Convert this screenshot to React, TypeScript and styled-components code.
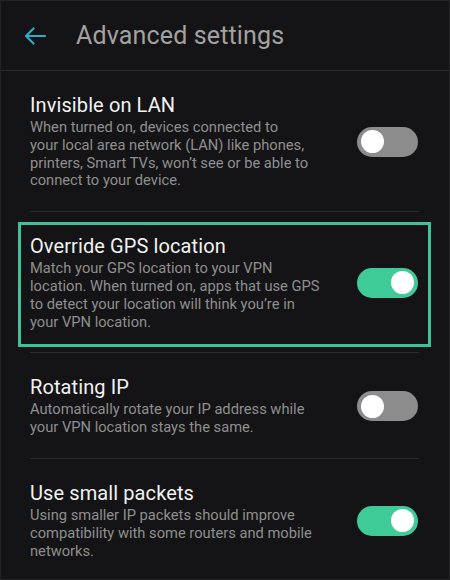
import styled, { createGlobalStyle } from "styled-components";

const GlobalStyle = createGlobalStyle`
  html, body {
    margin: 0;
    padding: 0;
    background: #141416;
  }
  body {
    font-family: Roboto, "Noto Sans", Arial, sans-serif;
    -webkit-font-smoothing: antialiased;
  }
`;

type Setting = {
  title: string;
  lines: string[];
  enabled: boolean;
  highlighted?: boolean;
};

const settings: Setting[] = [
  {
    title: "Invisible on LAN",
    lines: [
      "When turned on, devices connected to",
      "your local area network (LAN) like phones,",
      "printers, Smart TVs, won\u2019t see or be able to",
      "connect to your device.",
    ],
    enabled: false,
  },
  {
    title: "Override GPS location",
    lines: [
      "Match your GPS location to your VPN",
      "location. When turned on, apps that use GPS",
      "to detect your location will think you\u2019re in",
      "your VPN location.",
    ],
    enabled: true,
    highlighted: true,
  },
  {
    title: "Rotating IP",
    lines: [
      "Automatically rotate your IP address while",
      "your VPN location stays the same.",
    ],
    enabled: false,
  },
  {
    title: "Use small packets",
    lines: [
      "Using smaller IP packets should improve",
      "compatibility with some routers and mobile",
      "networks.",
    ],
    enabled: true,
  },
];

const BackArrow = () => (
  <svg width='22' height='18' viewBox='0 0 22 18' fill='none'>
    <path
      d='M21 9H2.5M9.5 1.5L2 9l7.5 7.5'
      stroke='#2eaacb'
      strokeWidth='2.2'
      strokeLinecap='round'
      strokeLinejoin='round'
    />
  </svg>
);

const App = () => {
  return (
    <>
      <GlobalStyle />
      <Screen>
        <Header>
          <BackButton>
            <BackArrow />
          </BackButton>
          <Title>Advanced settings</Title>
        </Header>
        <List>
          {settings.map((s) => (
            <Row key={s.title} $highlighted={s.highlighted}>
              <TextBlock>
                <RowTitle>{s.title}</RowTitle>
                <RowText>
                  {s.lines.map((l, i) => (
                    <span key={i}>
                      {l}
                      {i < s.lines.length - 1 && <br />}
                    </span>
                  ))}
                </RowText>
              </TextBlock>
              <Toggle $on={s.enabled}>
                <Knob />
              </Toggle>
            </Row>
          ))}
        </List>
      </Screen>
    </>
  );
};

export default App;

const Screen = styled.div`
  width: 450px;
  height: 580px;
  box-sizing: border-box;
  background: #141416;
  border: 1px solid #232325;
  overflow: hidden;
`;

const Header = styled.div`
  height: 69px;
  display: flex;
  align-items: center;
  border-bottom: 1px solid #2b2b2d;
`;

const BackButton = styled.div`
  width: 75px;
  display: flex;
  align-items: center;
  padding-left: 23px;
  box-sizing: border-box;
`;

const Title = styled.div`
  font-size: 25px;
  color: #a2a2a2;
  letter-spacing: 0.15px;
`;

const List = styled.div`
  padding: 0 30px 0 29px;
`;

const Row = styled.div<{ $highlighted?: boolean }>`
  position: relative;
  display: flex;
  align-items: center;
  justify-content: space-between;
  padding: 22px 0 21px;
  border-bottom: 1px solid #2c2c2e;

  &:last-child {
    border-bottom: none;
  }

  ${({ $highlighted }) =>
    $highlighted &&
    `
    &::after {
      content: "";
      position: absolute;
      top: 10px;
      bottom: 5px;
      left: -12px;
      right: -12px;
      border: 3px solid #3fc19a;
      pointer-events: none;
    }
  `}
`;

const TextBlock = styled.div`
  display: flex;
  flex-direction: column;
  gap: 2px;
`;

const RowTitle = styled.div`
  font-size: 20px;
  line-height: 24px;
  color: #f2f2f2;
  letter-spacing: 0.1px;
`;

const RowText = styled.div`
  font-size: 14.7px;
  line-height: 17.8px;
  color: #8f8f8f;
  white-space: nowrap;
`;

const Toggle = styled.div<{ $on: boolean }>`
  width: 61px;
  height: 30px;
  margin-right: 1px;
  border-radius: 15px;
  background: ${({ $on }) => ($on ? "#3ecb98" : "#8c8c8c")};
  display: flex;
  align-items: center;
  justify-content: ${({ $on }) => ($on ? "flex-end" : "flex-start")};
  padding: 0 4px;
  box-sizing: border-box;
  flex-shrink: 0;
`;

const Knob = styled.div`
  width: 23px;
  height: 23px;
  border-radius: 50%;
  background: #ffffff;
`;
